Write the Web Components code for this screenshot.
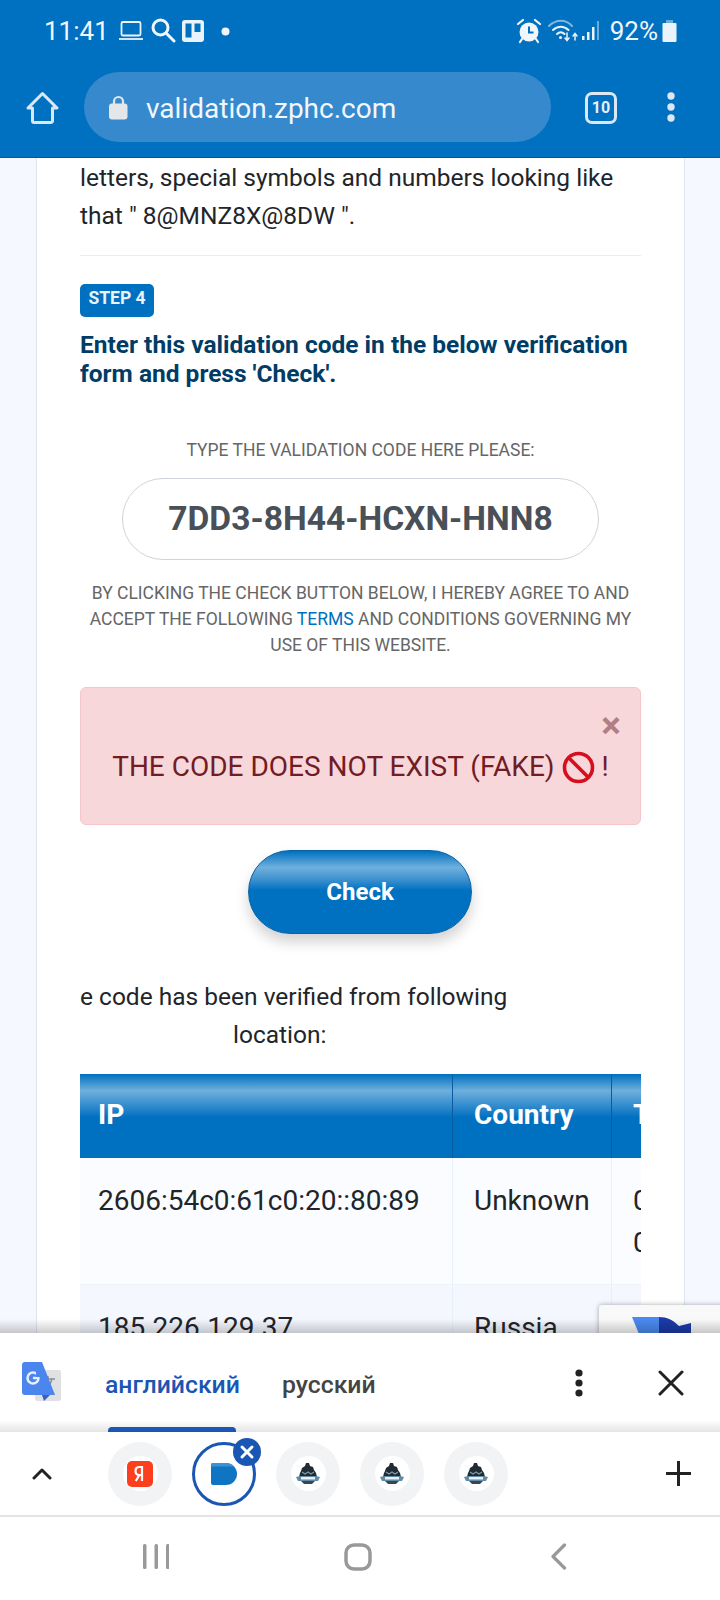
<!DOCTYPE html>
<html lang="en">
<head>
<meta charset="utf-8">
<title>validation.zphc.com</title>
<style>
  html, body { margin: 0; padding: 0; }
  body {
    width: 720px;
    height: 1600px;
    overflow: hidden;
    display: flex;
    flex-direction: column;
    background: #fff;
    font-family: Roboto, "Liberation Sans", sans-serif;
  }
</style>
</head>
<body>
<status-bar></status-bar>
<url-bar></url-bar>
<validation-page>
  <step-badge slot="badge">STEP 4</step-badge>
  <code-alert slot="alert">THE CODE DOES NOT EXIST (FAKE)</code-alert>
  <check-button slot="btn">Check</check-button>
  <ip-table slot="table"></ip-table>
</validation-page>
<translate-bar></translate-bar>
<tab-strip></tab-strip>
<nav-bar></nav-bar>

<script>
class StatusBar extends HTMLElement {
  connectedCallback() {
    this.attachShadow({ mode: 'open' });
    this.shadowRoot.innerHTML = `
      <style>
        :host {
          display: flex;
          align-items: center;
          height: 62px;
          padding: 0 43px 0 44px;
          background: #0070c0;
          color: #f0f6fb;
          font-size: 26px;
        }
        .left, .right { display: flex; align-items: center; }
        .right { margin-left: auto; }
        svg { display: block; }
      </style>
      <div class="left">
        <span>11:41</span>
        <svg style="margin-left:9px" width="26" height="22" viewBox="0 0 26 22" fill="none" stroke="#eaf3fa" stroke-width="1.8"><rect x="3.5" y="2" width="19" height="13.5" rx="1.5"/><path d="M1 19h24"/></svg>
        <svg style="margin-left:6px" width="26" height="28" viewBox="0 0 26 28" fill="none" stroke="#f0f6fb" stroke-width="3"><circle cx="10.5" cy="10.5" r="7.5"/><path d="M16 16l8 8" stroke-linecap="round"/></svg>
        <svg style="margin-left:6px" width="22" height="22" viewBox="0 0 22 22"><rect width="22" height="22" rx="3" fill="#eaf3fa"/><rect x="3.5" y="3.5" width="6" height="14" fill="#0070c0"/><rect x="12.5" y="3.5" width="6" height="8.5" fill="#0070c0"/></svg>
        <svg style="margin-left:17px" width="9" height="9" viewBox="0 0 9 9"><circle cx="4.5" cy="4.5" r="4" fill="#f0f6fb"/></svg>
      </div>
      <div class="right">
        <svg width="26" height="26" viewBox="0 0 26 26"><circle cx="13" cy="14" r="9.5" fill="#f0f6fb"/><path d="M13 8.5v6h4.5" fill="none" stroke="#0070c0" stroke-width="2"/><path d="M2 6l5-4M24 6l-5-4M6 21l-2 3M20 21l2 3" stroke="#f0f6fb" stroke-width="2.2" stroke-linecap="round"/></svg>
        <svg style="margin-left:6px" width="30" height="24" viewBox="0 0 30 24" fill="none" stroke-linecap="round"><path d="M1 7c7-7 17-7 23 0" stroke="#7fb8e0" stroke-width="2"/><path d="M5 11c4.500-4.500 11-4.500 15.500 0" stroke="#eaf3fa" stroke-width="2"/><path d="M9 15c2.500-2.500 5-2.500 7.500 0" stroke="#eaf3fa" stroke-width="2"/><circle cx="12.500" cy="18.500" r="1.500" fill="#eaf3fa"/><path d="M19 14v7M17 19l2 2.500 2-2.500M27 21v-6M25 17l2-2.500 2 2.500" stroke="#eaf3fa" stroke-width="1.500"/></svg>
        <svg style="margin-left:3px" width="20" height="24" viewBox="0 0 20 24" fill="#eaf3fa"><rect x="1" y="17" width="2.500" height="4"/><rect x="6" y="13" width="2.500" height="8"/><rect x="11" y="8" width="2.500" height="13"/><rect x="16" y="2" width="2" height="19" fill="#6aaddb"/></svg>
        <span style="margin-left:9px">92%</span>
        <svg style="margin-left:4px" width="15" height="22" viewBox="0 0 15 22"><rect x="4" y="0" width="7" height="3" fill="#6aaddb"/><rect x="0.500" y="3" width="14" height="19" rx="1" fill="#eaf3fa"/></svg>
      </div>`;
  }
}

class UrlBar extends HTMLElement {
  connectedCallback() {
    this.attachShadow({ mode: 'open' });
    this.shadowRoot.innerHTML = `
      <style>
        :host {
          display: flex;
          align-items: flex-start;
          height: 96px;
          background: #0070c0;
          box-shadow: inset 0 -1px 0 #005b9e;
        }
        .home { margin: 29px 0 0 26px; width: 33px; height: 33px; }
        .pill {
          display: flex;
          align-items: center;
          width: 467px;
          height: 70px;
          margin: 10px 0 0 25px;
          border-radius: 35px;
          background: #3689cc;
          color: #f2f7fb;
          font-size: 28px;
        }
        .pill span { margin-top: 2px; }
        .lock { margin: 0 18px 0 25px; }
        .tabs {
          box-sizing: border-box;
          width: 32px;
          height: 32px;
          margin: 30px 0 0 34px;
          border: 3px solid #dbe8f3;
          border-radius: 7px;
          color: #e6f0f8;
          font-size: 16px;
          font-weight: 700;
          line-height: 26px;
          text-align: center;
        }
        .dots { margin: 30px 0 0 49px; }
        svg { display: block; }
      </style>
      <svg class="home" viewBox="0 0 33 33" fill="none" stroke="#dbe8f3" stroke-width="3" stroke-linejoin="round"><path d="M2 17L16.500 2.500 31 17h-4.500v13a1.500 1.500 0 0 1-1.500 1.500H8a1.500 1.500 0 0 1-1.500-1.500V17z"/></svg>
      <div class="pill">
        <svg class="lock" width="19" height="25" viewBox="0 0 19 25"><path d="M5 10V6.500a4.500 4.500 0 0 1 9 0V10" fill="none" stroke="#e3e7ea" stroke-width="2.200"/><rect y="8.500" width="18.500" height="16" rx="3" fill="#e3e7ea"/></svg>
        <span>validation.zphc.com</span>
      </div>
      <div class="tabs">10</div>
      <svg class="dots" width="10" height="30" viewBox="0 0 10 30" fill="#dbe8f3"><circle cx="5" cy="4" r="3.700"/><circle cx="5" cy="15" r="3.700"/><circle cx="5" cy="26" r="3.700"/></svg>`;
  }
}

class StepBadge extends HTMLElement {
  connectedCallback() {
    this.attachShadow({ mode: 'open' });
    this.shadowRoot.innerHTML = `
      <style>
        :host {
          display: block;
          box-sizing: border-box;
          width: 74px;
          height: 33px;
          border-radius: 5px;
          background: #0070c0;
          color: #e8f3fa;
          font-size: 17.5px;
          font-weight: 700;
          line-height: 29px;
          text-align: center;
        }
      </style>
      <slot></slot>`;
  }
}

class CodeAlert extends HTMLElement {
  connectedCallback() {
    this.attachShadow({ mode: 'open' });
    this.shadowRoot.innerHTML = `
      <style>
        :host {
          display: block;
          box-sizing: border-box;
          height: 138px;
          padding: 20px 19px 0 0;
          border: 1px solid #f5c6cb;
          border-radius: 6px;
          background: #f8d7da;
          color: #721c24;
        }
        .close {
          height: 36px;
          text-align: right;
          color: #b27e86;
          font-size: 37px;
          font-weight: 700;
          line-height: 36px;
        }
        .msg {
          display: flex;
          align-items: center;
          justify-content: center;
          gap: 7px;
          margin-top: 4px;
          padding-left: 19px;
          font-size: 28px;
          line-height: 38px;
          white-space: nowrap;
        }
        svg { display: block; flex: none; }
      </style>
      <div class="close">×</div>
      <div class="msg">
        <span><slot></slot></span>
        <svg width="33" height="33" viewBox="0 0 33 33" fill="none" stroke="#d50f1e" stroke-width="3.600"><circle cx="16.500" cy="16.500" r="14"/><path d="M6.500 6.500l20 20"/></svg>
        <span>!</span>
      </div>`;
  }
}

class CheckButton extends HTMLElement {
  connectedCallback() {
    this.attachShadow({ mode: 'open' });
    this.shadowRoot.innerHTML = `
      <style>
        :host {
          display: flex;
          align-items: center;
          justify-content: center;
          box-sizing: border-box;
          width: 224px;
          height: 84px;
          border: 1px solid #0a62a6;
          border-radius: 42px;
          background: linear-gradient(#0070c0 0%, #6fb0dd 20%, #3f93d0 34%, #0070c0 48%);
          box-shadow: 0 8px 14px rgba(0, 0, 0, 0.18);
          color: #fff;
          font-size: 24px;
          font-weight: 700;
        }
      </style>
      <slot></slot>`;
  }
}

class IpTable extends HTMLElement {
  connectedCallback() {
    this.attachShadow({ mode: 'open' });
    const rows = [
      ['IP', 'Country', 'T'],
      ['2606:54c0:61c0:20::80:89', 'Unknown', '0<br>0'],
      ['185.226.129.37', 'Russia', '']
    ];
    let html = '';
    rows.forEach((r, i) => {
      const cls = i === 0 ? 'head' : i === 1 ? 'odd' : 'even';
      r.forEach(t => { html += `<div class="${cls}">${t}</div>`; });
    });
    this.shadowRoot.innerHTML = `
      <style>
        :host { display: block; overflow: hidden; }
        .grid {
          display: grid;
          grid-template-columns: 373px 159px 280px;
          grid-template-rows: 84px 127px 120px;
          width: 812px;
          color: #212529;
          font-size: 28px;
          line-height: 42px;
        }
        .grid > div { box-sizing: border-box; padding: 0 18px 0 21px; }
        .grid > div:nth-child(3n+1) { padding-left: 18px; }
        .odd, .even { padding-top: 22px !important; border-right: 1px solid #e8f0fb; }
        .odd { background: #fbfcff; border-bottom: 1px solid #eef3fb; }
        .even { background: #f4f7fe; }
        .head {
          padding-top: 20px !important;
          border-right: 1px solid #0a5c9e;
          background: linear-gradient(#0070c0 0%, #6fb0dd 20%, #3f93d0 34%, #0070c0 52%);
          color: #fff;
          font-weight: 700;
        }
      </style>
      <div class="grid">${html}</div>`;
  }
}

class ValidationPage extends HTMLElement {
  connectedCallback() {
    this.attachShadow({ mode: 'open' });
    this.shadowRoot.innerHTML = `
      <style>
        :host {
          display: block;
          position: relative;
          flex: none;
          height: 1175px;
          overflow: hidden;
          background: #f5f8ff;
          color: #212529;
        }
        .card {
          box-sizing: border-box;
          width: 649px;
          height: 100%;
          margin-left: 36px;
          padding: 1px 43px 0;
          border: solid #dfe6ee;
          border-width: 0 1px;
          background: #fff;
          font-size: 24.5px;
          line-height: 38px;
        }
        .intro { margin: 0; }
        hr { height: 1px; margin: 20px 0 28px; border: 0; background: #e9edf1; }
        h2 {
          margin: 13px 0 0;
          color: #003d66;
          font-size: 24.5px;
          font-weight: 700;
          line-height: 29px;
        }
        .label, .terms {
          color: #666;
          font-size: 17.5px;
          line-height: 26px;
          text-align: center;
        }
        .label { margin-top: 49px; }
        .code {
          box-sizing: border-box;
          height: 82px;
          margin: 15px 42px 0;
          border: 1px solid #ced4da;
          border-radius: 41px;
          color: #495057;
          font-size: 33.6px;
          font-weight: 700;
          line-height: 79px;
          text-align: center;
        }
        .terms { margin-top: 20px; white-space: nowrap; }
        a { color: #0070c0; text-decoration: none; }
        ::slotted(code-alert) { margin-top: 29px; }
        ::slotted(check-button) { margin: 25px 0 0 168px; }
        .verified { margin-top: 44px; }
        .loc { padding-left: 153px; }
        ::slotted(ip-table) { margin-top: 20px; }
        .captcha {
          position: absolute;
          left: 599px;
          top: 1147px;
          width: 130px;
          height: 60px;
          border-radius: 3px;
          background: #f9f9f9;
          box-shadow: 0 0 5px rgba(0, 0, 0, 0.35);
        }
        .captcha svg { position: absolute; left: 31px; top: 10px; }
        .shade {
          position: absolute;
          left: 0;
          right: 0;
          bottom: 0;
          height: 14px;
          background: linear-gradient(rgba(0, 0, 0, 0), rgba(0, 0, 0, 0.2));
        }
      </style>
      <div class="card">
        <p class="intro">letters, special symbols and numbers looking like<br>that " 8@MNZ8X@8DW ".</p>
        <hr>
        <slot name="badge"></slot>
        <h2>Enter this validation code in the below verification form and press 'Check'.</h2>
        <div class="label">TYPE THE VALIDATION CODE HERE PLEASE:</div>
        <div class="code">7DD3-8H44-HCXN-HNN8</div>
        <div class="terms">BY CLICKING THE CHECK BUTTON BELOW, I HEREBY AGREE TO AND<br>ACCEPT THE FOLLOWING <a>TERMS</a> AND CONDITIONS GOVERNING MY<br>USE OF THIS WEBSITE.</div>
        <slot name="alert"></slot>
        <slot name="btn"></slot>
        <div class="verified">e code has been verified from following<br><span class="loc">location:</span></div>
        <slot name="table"></slot>
      </div>
      <div class="captcha">
        <svg width="62" height="30" viewBox="0 0 62 30"><path d="M2 2h27v26H1l8-9z" fill="#4a8af0"/><path d="M29 2c8 0 14 3 20 9l12-3v20H29z" fill="#1c3aa9"/></svg>
      </div>
      <div class="shade"></div>`;
  }
}

class TranslateBar extends HTMLElement {
  connectedCallback() {
    this.attachShadow({ mode: 'open' });
    this.shadowRoot.innerHTML = `
      <style>
        :host {
          display: flex;
          align-items: center;
          position: relative;
          box-sizing: border-box;
          height: 99px;
          background: linear-gradient(#fff 88%, #e4e4e4 100%);
          font-size: 24.8px;
          font-weight: 500;
        }
        .g { margin: -2px 0 0 22px; }
        .en { margin: 4px 0 0 43px; color: #1a56b4; }
        .ru { margin: 4px 0 0 42px; color: #444; }
        .menu { margin-left: auto; }
        .x { margin: 0 36px 0 74px; }
        .bar {
          position: absolute;
          left: 108px;
          bottom: 0;
          width: 128px;
          height: 5px;
          border-radius: 4px 4px 0 0;
          background: #1a56b4;
        }
        svg { display: block; }
      </style>
      <svg class="g" width="40" height="40" viewBox="0 0 40 40">
        <rect x="13" y="8" width="26" height="31" rx="2" fill="#dfe1e3"/>
        <path d="M19 17h14M26 14v3M30 17c-2 7-7 12-11 14M22 21c2 4 6 8 10 10" fill="none" stroke="#8a8f94" stroke-width="1.500"/>
        <path d="M3 0h17l13 33H3a3 3 0 0 1-3-3V3a3 3 0 0 1 3-3z" fill="#4a86ee"/>
        <path d="M20 33l2 6 6-6z" fill="#3b5fc4"/>
        <circle cx="11" cy="16" r="5.500" fill="none" stroke="#e8eefb" stroke-width="2.500"/>
        <path d="M11 16h6" stroke="#e8eefb" stroke-width="2.500"/>
        <rect x="14" y="10" width="5" height="5" fill="#4a86ee"/>
      </svg>
      <span class="en">английский</span>
      <span class="ru">русский</span>
      <svg class="menu" width="10" height="28" viewBox="0 0 10 28" fill="#222"><circle cx="5" cy="4" r="3.600"/><circle cx="5" cy="14" r="3.600"/><circle cx="5" cy="24" r="3.600"/></svg>
      <svg class="x" width="26" height="26" viewBox="0 0 26 26" stroke="#222" stroke-width="3" stroke-linecap="round"><path d="M2 2l22 22M24 2L2 24"/></svg>
      <div class="bar"></div>`;
  }
}

class TabChip extends HTMLElement {
  connectedCallback() {
    this.attachShadow({ mode: 'open' });
    const kind = this.getAttribute('kind');
    const ya = `<div class="in"><svg width="26" height="26" viewBox="0 0 26 26"><rect width="26" height="26" rx="5" fill="#fc3f1d"/><path d="M15 20V6h-2.500C10 6 8.500 7.500 8.500 10s1.500 4 3.800 4l-3.500 6M15 14h-2.500" fill="none" stroke="#fff" stroke-width="2.200"/></svg></div>`;
    const logo = `<div class="in"><svg width="24" height="24" viewBox="0 0 24 24">
      <path d="M10 1h3l1 3 3 1 1 3 2 3 1 4H3l1-4 1-2 1-3 3-2z" fill="#1f2c36"/>
      <path d="M6 10l3 2 3-2 3 2 3-2" fill="none" stroke="#8199a8" stroke-width="1.200"/>
      <path d="M0 15l4-1h16l4 1-2 4H2z" fill="#5f8ba6"/>
      <rect x="5" y="15" width="14" height="2.500" fill="#e8eef2"/>
      <path d="M5 19h14l-3 3H8z" fill="#33495a"/>
    </svg></div>`;
    const active = `<svg width="26" height="22" viewBox="0 0 26 22"><path d="M2 0h13a11 11 0 0 1 0 22H2a2 2 0 0 1-2-2V2a2 2 0 0 1 2-2z" fill="#0f75c3"/><path d="M2 0h13a11 11 0 0 1 8 3.500H0V2a2 2 0 0 1 2-2z" fill="#3c92d4"/></svg><div class="badge"><svg width="16" height="16" viewBox="0 0 16 16" stroke="#fff" stroke-width="3" stroke-linecap="round"><path d="M3 3l10 10M13 3L3 13"/></svg></div>`;
    this.shadowRoot.innerHTML = `
      <style>
        :host {
          display: flex;
          align-items: center;
          justify-content: center;
          position: relative;
          box-sizing: border-box;
          width: 64px;
          height: 64px;
          border-radius: 50%;
          background: #f1f3f4;
        }
        :host([kind="active"]) { background: #fff; border: 3px solid #1a56b4; }
        .in {
          display: flex;
          align-items: center;
          justify-content: center;
          width: 35px;
          height: 35px;
          border-radius: 50%;
          background: #fff;
        }
        svg { display: block; }
        .badge {
          position: absolute;
          top: -7px;
          right: -8px;
          display: flex;
          align-items: center;
          justify-content: center;
          width: 28px;
          height: 28px;
          border-radius: 50%;
          background: #1a56b4;
        }
      </style>
      ${kind === 'active' ? active : kind === 'ya' ? ya : logo}`;
  }
}

class TabStrip extends HTMLElement {
  connectedCallback() {
    this.attachShadow({ mode: 'open' });
    this.shadowRoot.innerHTML = `
      <style>
        :host {
          display: flex;
          align-items: center;
          box-sizing: border-box;
          height: 85px;
          border-bottom: 2px solid #e4e4e4;
          background: #fff;
        }
        .up { margin-left: 32px; }
        .tabs { display: flex; gap: 20px; margin-left: 56px; }
        .plus { margin-left: auto; margin-right: 29px; }
        svg { display: block; }
      </style>
      <svg class="up" width="20" height="13" viewBox="0 0 20 13" fill="none" stroke="#222" stroke-width="3" stroke-linecap="round" stroke-linejoin="round"><path d="M2 11l8-8 8 8"/></svg>
      <div class="tabs">
        <tab-chip kind="ya"></tab-chip>
        <tab-chip kind="active"></tab-chip>
        <tab-chip></tab-chip>
        <tab-chip></tab-chip>
        <tab-chip></tab-chip>
      </div>
      <svg class="plus" width="25" height="25" viewBox="0 0 25 25" stroke="#222" stroke-width="3"><path d="M12.500 0v25M0 12.500h25"/></svg>`;
  }
}

class NavBar extends HTMLElement {
  connectedCallback() {
    this.attachShadow({ mode: 'open' });
    this.shadowRoot.innerHTML = `
      <style>
        :host {
          display: flex;
          align-items: flex-start;
          flex: 1;
          padding-top: 26px;
          background: #fff;
        }
        svg { display: block; }
      </style>
      <svg style="margin-left:143px" width="26" height="27" viewBox="0 0 26 27" fill="#999"><rect x="0" y="1" width="3.500" height="25" rx="1.500"/><rect x="11.500" y="1" width="3.500" height="25" rx="1.500"/><rect x="23" y="1" width="3.500" height="25" rx="1.500"/></svg>
      <svg style="margin-left:175px" width="28" height="28" viewBox="0 0 28 28" fill="none" stroke="#999" stroke-width="3.500"><rect x="2" y="2" width="24" height="24" rx="8"/></svg>
      <svg style="margin-left:178px" width="17" height="27" viewBox="0 0 17 27" fill="none" stroke="#999" stroke-width="3.200" stroke-linecap="round" stroke-linejoin="round"><path d="M14.500 2L3 13.500 14.500 25"/></svg>`;
  }
}

customElements.define('status-bar', StatusBar);
customElements.define('url-bar', UrlBar);
customElements.define('step-badge', StepBadge);
customElements.define('code-alert', CodeAlert);
customElements.define('check-button', CheckButton);
customElements.define('ip-table', IpTable);
customElements.define('validation-page', ValidationPage);
customElements.define('translate-bar', TranslateBar);
customElements.define('tab-chip', TabChip);
customElements.define('tab-strip', TabStrip);
customElements.define('nav-bar', NavBar);
</script>
</body>
</html>
